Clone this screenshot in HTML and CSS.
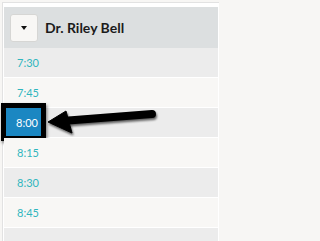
FILE: index.html
```html
<!DOCTYPE html>
<html>
<head>
<meta charset="utf-8">
<link rel="stylesheet" href="styles.css">
</head>
<body>
<div class="page">
  <div class="panel">
    <div class="header">
      <button class="dropdown"><span class="caret"></span></button>
      <span class="name">Dr. Riley Bell</span>
    </div>
    <div class="row odd"><span class="time">7:30</span></div>
    <div class="row even"><span class="time">7:45</span></div>
    <div class="row odd"><span class="time">8:00</span><span class="highlight">8:00</span></div>
    <div class="row even"><span class="time">8:15</span></div>
    <div class="row odd"><span class="time">8:30</span></div>
    <div class="row even"><span class="time">8:45</span></div>
    <div class="row odd last"></div>
  </div>
  <svg class="arrow" width="225" height="241" viewBox="0 0 225 241">
    <defs>
      <filter id="sh" x="-20%" y="-50%" width="140%" height="200%">
        <feGaussianBlur in="SourceAlpha" stdDeviation="1.2" result="b"/>
        <feOffset dx="1" dy="2" in="b" result="o"/>
        <feComponentTransfer in="o" result="s"><feFuncA type="linear" slope="0.6"/></feComponentTransfer>
        <feMerge><feMergeNode in="s"/><feMergeNode in="SourceGraphic"/></feMerge>
      </filter>
    </defs>
    <g filter="url(#sh)" fill="#000" stroke="#000">
      <line x1="62" y1="121" x2="152" y2="114" stroke-width="8" stroke-linecap="round"/>
      <polygon points="48,122 66,111 72,133" stroke-width="1" stroke-linejoin="round"/>
    </g>
  </svg>
</div>
</body>
</html>
```
FILE: styles.css
```css
html, body {
  margin: 0;
  padding: 0;
  background: #f7f6f4;
  font-family: Lato, "Open Sans", sans-serif;
  overflow: hidden;
}
.page {
  position: relative;
  width: 225px;
  height: 241px;
  padding: 2px 0 0 2px;
  box-sizing: border-box;
}
.panel {
  width: 217px;
  box-sizing: border-box;
  border-top: 1px solid #e2e2e2;
  border-left: 1px solid #e2e2e2;
  background: #ffffff;
  padding: 4px 1px 0 1px;
}
.header {
  height: 41px;
  background: #dcdfe0;
  display: flex;
  align-items: center;
  padding-left: 6px;
  gap: 7px;
}
.dropdown {
  width: 28px;
  height: 28px;
  margin: 0;
  padding: 0;
  border: 1px solid #d6d6d4;
  border-radius: 3px;
  background: #f8f7f5;
  display: flex;
  align-items: center;
  justify-content: center;
}
.caret {
  width: 0;
  height: 0;
  border-left: 3.5px solid transparent;
  border-right: 3.5px solid transparent;
  border-top: 4px solid #111;
  margin-top: 1px;
}
.name {
  font-weight: 700;
  font-size: 14px;
  color: #1b1b1b;
}
.row {
  position: relative;
  height: 29px;
  border-bottom: 1px solid #ffffff;
  display: flex;
  align-items: center;
  padding-left: 13px;
}
.odd { background: #ececec; }
.even { background: #f8f7f5; }
.last { height: 20px; }
.time {
  font-size: 11px;
  font-weight: 400;
  color: #30b6be;
}
.highlight {
  position: absolute;
  left: -3px;
  top: -5px;
  width: 45px;
  height: 38px;
  box-sizing: border-box;
  border: 5px solid #000;
  background: #1b87c2;
  color: #ffffff;
  font-size: 11px;
  display: flex;
  align-items: center;
  padding-left: 10px;
  box-shadow: 1px 2px 3px rgba(0,0,0,0.5);
}
.arrow {
  position: absolute;
  left: 0;
  top: 0;
  pointer-events: none;
}
```
